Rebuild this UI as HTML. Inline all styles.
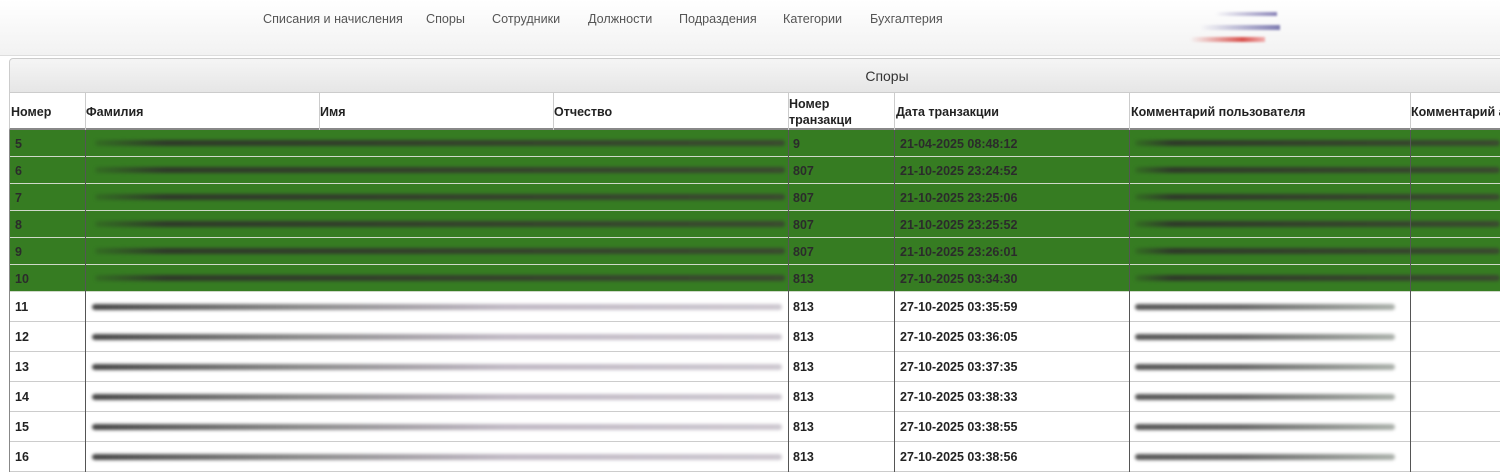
<!DOCTYPE html>
<html><head><meta charset="utf-8"><style>
body{margin:0;width:1500px;height:472px;overflow:hidden;background:#fff;font-family:"Liberation Sans",Arial,sans-serif;position:relative}
.nav{position:absolute;left:0;top:0;width:1500px;height:55px;background:linear-gradient(#fff,#f2f2f2);border-bottom:1px solid #ddd}
.nav span{position:absolute;top:12px;font-size:12.6px;color:#555}
.panel{position:absolute;left:9px;top:58px;width:1500px;height:35px;background:linear-gradient(#f5f5f5,#e6e6e6);border:1px solid #ccc;border-radius:4px 0 0 0;box-sizing:border-box}
.panel div{position:absolute;top:9px;font-size:14px;color:#333;text-align:center}
.c{position:absolute;font-size:12.5px;font-weight:bold;color:#222;box-sizing:border-box;padding-left:4px}
.row{position:absolute;left:10px;width:1490px;box-sizing:border-box}
.g{background:#367c22;border-bottom:1px solid #cfd9c9}
.w{background:#fff;border-bottom:1px solid #ccc}
.vl{position:absolute;width:1px;background:#555}
.blur{position:absolute;height:6px;filter:blur(1.5px);border-radius:3px}
</style></head><body>
<div class="nav">
<span style="left:263px">Списания и начисления</span>
<span style="left:426px">Споры</span>
<span style="left:492px">Сотрудники</span>
<span style="left:588px">Должности</span>
<span style="left:679px">Подраздения</span>
<span style="left:783px">Категории</span>
<span style="left:870px">Бухгалтерия</span>
<div style="position:absolute;left:1215px;top:12px;width:62px;height:4px;background:linear-gradient(90deg,transparent,#8a84b8);filter:blur(1px)"></div>
<div style="position:absolute;left:1200px;top:25px;width:80px;height:5px;background:linear-gradient(90deg,transparent,#7d7ab0);filter:blur(1px)"></div>
<div style="position:absolute;left:1190px;top:37px;width:75px;height:5px;background:linear-gradient(90deg,transparent,#d9534f 70%,#f0b0b0);filter:blur(1px)"></div>
</div>
<div class="panel"><div style="left:-9px;width:1772px">Споры</div></div>
<div style="position:absolute;left:9px;top:93px;width:1491px;height:37px;border-bottom:2px solid #888;border-left:1px solid #ccc;box-sizing:border-box"></div>
<div class="c" style="left:7px;top:105px">Номер</div>
<div class="c" style="left:82px;top:105px">Фамилия</div>
<div class="c" style="left:316px;top:105px">Имя</div>
<div class="c" style="left:550px;top:105px">Отчество</div>
<div class="c" style="left:785px;top:96px;line-height:16px">Номер<br>транзакци</div>
<div class="c" style="left:892px;top:105px">Дата транзакции</div>
<div class="c" style="left:1127px;top:105px">Комментарий пользователя</div>
<div class="c" style="left:1407px;top:105px;white-space:nowrap">Комментарий а</div>
<div id="rows"></div>
<script>
var h='';
var gr=[[5,9,'21-04-2025 08:48:12'],[6,807,'21-10-2025 23:24:52'],[7,807,'21-10-2025 23:25:06'],[8,807,'21-10-2025 23:25:52'],[9,807,'21-10-2025 23:26:01'],[10,813,'27-10-2025 03:34:30']];
var wr=[[11,'27-10-2025 03:35:59'],[12,'27-10-2025 03:36:05'],[13,'27-10-2025 03:37:35'],[14,'27-10-2025 03:38:33'],[15,'27-10-2025 03:38:55'],[16,'27-10-2025 03:38:56']];
gr.forEach(function(r,i){var t=130+i*27;
h+='<div class="row g" style="top:'+t+'px;height:27px"></div>';
h+='<div class="blur" style="left:95px;top:'+(t+10)+'px;width:690px;background:linear-gradient(90deg,rgba(40,50,35,.2),#2f3a2a 10%,#3a4a30)"></div>';
h+='<div class="blur" style="left:1135px;top:'+(t+10)+'px;width:365px;background:linear-gradient(90deg,rgba(40,50,35,.2),#2f3a2a 10%,#3a4a30)"></div>';
h+='<div class="c" style="left:11px;top:'+(t+7)+'px;color:#2b2b2b">'+r[0]+'</div>';
h+='<div class="c" style="left:789px;top:'+(t+7)+'px;color:#2b2b2b">'+r[1]+'</div>';
h+='<div class="c" style="left:896px;top:'+(t+7)+'px;color:#2b2b2b">'+r[2]+'</div>';});
wr.forEach(function(r,i){var t=292+i*30;
h+='<div class="row w" style="top:'+t+'px;height:30px"></div>';
h+='<div class="blur" style="left:92px;top:'+(t+12)+'px;width:690px;background:linear-gradient(90deg,#444,#888 30%,#c0b8c4 60%,#cdc8d0)"></div>';
h+='<div class="blur" style="left:1135px;top:'+(t+12)+'px;width:260px;background:linear-gradient(90deg,#555,#666 40%,#aab0aa)"></div>';
h+='<div class="c" style="left:11px;top:'+(t+8)+'px">'+r[0]+'</div>';
h+='<div class="c" style="left:789px;top:'+(t+8)+'px">813</div>';
h+='<div class="c" style="left:896px;top:'+(t+8)+'px">'+r[1]+'</div>';});
[85,788,894,1129,1410].forEach(function(x){h+='<div class="vl" style="left:'+x+'px;top:130px;height:342px"></div>';});
h+='<div class="vl" style="left:9px;top:130px;height:342px;background:#888"></div>';
[85,319,553,788,894,1129,1410].forEach(function(x){h+='<div class="vl" style="left:'+x+'px;top:93px;height:37px;background:#ccc"></div>';});
document.getElementById('rows').innerHTML=h;
</script>
</body></html>
